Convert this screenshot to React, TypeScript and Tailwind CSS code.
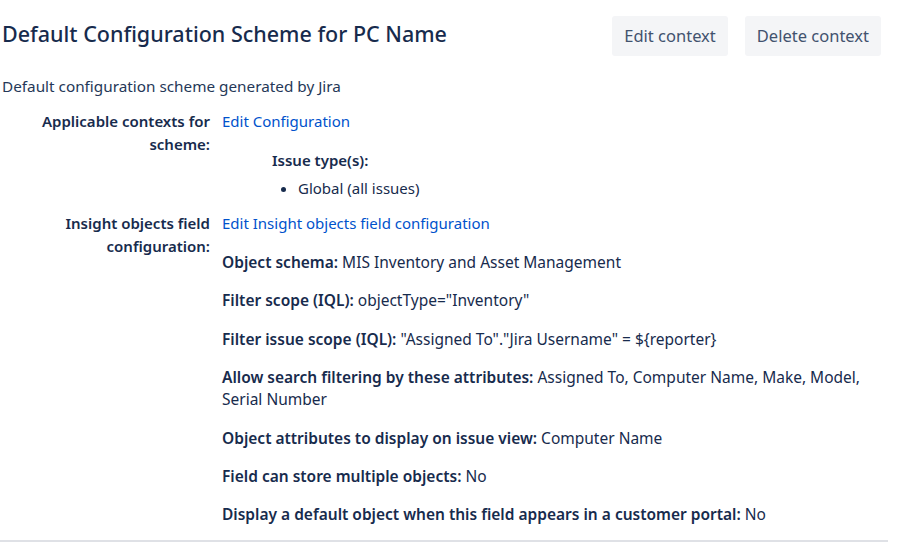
import React from 'react'

const details: { label: string; value: string }[] = [
  { label: 'Object schema:', value: 'MIS Inventory and Asset Management' },
  { label: 'Filter scope (IQL):', value: 'objectType="Inventory"' },
  { label: 'Filter issue scope (IQL):', value: '"Assigned To"."Jira Username" = ${reporter}' },
  { label: 'Allow search filtering by these attributes:', value: 'Assigned To, Computer Name, Make, Model, Serial Number' },
  { label: 'Object attributes to display on issue view:', value: 'Computer Name' },
  { label: 'Field can store multiple objects:', value: 'No' },
  { label: 'Display a default object when this field appears in a customer portal:', value: 'No' },
]

export default function App() {
  const btn = 'h-10 px-[12px] rounded-[3px] bg-[#f4f5f7] text-[#42526e] text-[16.5px]'

  return (
    <div className="w-[906px] h-[542px] overflow-hidden bg-white text-[#172b4d] font-['Noto_Sans',sans-serif] text-[15px] leading-[22px]">
      <div className="w-[888px] h-[542px] border-b-2 border-[#dfe1e6] flex flex-col">
        {/* header */}
        <div className="flex items-center justify-between pl-[2px] pt-[16px] pr-[7px]">
          <h1 className="text-[21.5px] font-medium leading-[36px] -mt-[4px]">Default Configuration Scheme for PC Name</h1>
          <div className="flex gap-[17px]">
            <button className={btn}>Edit context</button>
            <button className={btn}>Delete context</button>
          </div>
        </div>

        <p className="pl-[2px] mt-[19px] text-[15.3px] text-[#253858]">Default configuration scheme generated by Jira</p>

        <div className="grid grid-cols-[210px_1fr] gap-x-[12px] mt-[13px]">
          <div className="text-right font-semibold leading-[23px]">Applicable contexts for scheme:</div>
          <div>
            <a className="text-[#0052cc] leading-[23px] block">Edit Configuration</a>
            <div className="pl-[50px] mt-[16px]">
              <p className="font-semibold">Issue type(s):</p>
              <ul className="mt-[6px] pl-[26px] list-disc">
                <li>Global (all issues)</li>
              </ul>
            </div>
          </div>

          <div className="text-right font-semibold leading-[23px] mt-[13px]">Insight objects field configuration:</div>
          <div className="mt-[13px]">
            <a className="text-[#0052cc] leading-[23px] block">Edit Insight objects field configuration</a>
            <div className="mt-[16px] flex flex-col gap-[16.4px] pr-[14px] text-[15.5px]">
              {details.map(d => (
                <p key={d.label}>
                  <span className="font-semibold">{d.label}</span> {d.value}
                </p>
              ))}
            </div>
          </div>
        </div>
      </div>
    </div>
  )
}
